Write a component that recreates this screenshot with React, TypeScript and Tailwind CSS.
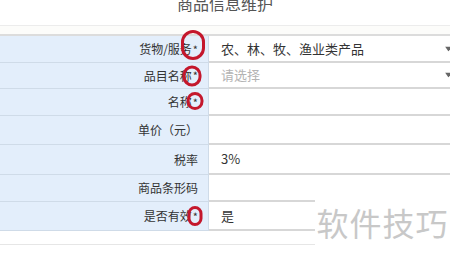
import type { ReactNode } from 'react';

const FONT = { fontFamily: '"Noto Sans CJK SC", "Liberation Sans", sans-serif' };

type Row = { label: string; value?: ReactNode; h: string; arrow?: boolean; ring?: string };

const ROWS: Row[] = [
  { label: '货物/服务', value: '农、林、牧、渔业类产品', h: 'h-[27px]', arrow: true, ring: 'h-[30px] w-[24px] -translate-x-[2px] -translate-y-[4px]' },
  { label: '品目名称', value: <span className="text-[#b3b3b3]">请选择</span>, h: 'h-[26px]', arrow: true, ring: 'h-[21px] w-[19px] -translate-x-[3px]' },
  { label: '名称', h: 'h-[27px]', ring: 'h-[18px] w-[17px] -translate-y-[1px]' },
  { label: '单价（元）', h: 'h-[29px]' },
  { label: '税率', value: '3%', h: 'h-[30px]' },
  { label: '商品条形码', h: 'h-[27px]' },
  { label: '是否有效', value: '是', h: 'h-[29px]', ring: 'h-[20px] w-[15px]' },
];

export default function App() {
  return (
    <div className="relative h-[270px] w-[450px] overflow-hidden bg-white" style={FONT}>
      <div className="h-[26px] overflow-hidden border-b border-[#ececec] text-center">
        <div className="-mt-[7px] text-[16px] leading-[20px] text-[#555]">商品信息维护</div>
      </div>
      <div className="h-[10px] border-b-2 border-[#dcdcdc] bg-[#fcfcfa]" />
      <div>
        {ROWS.map((r) => (
          <div key={r.label} className={`flex ${r.h}`}>
            <div className="flex w-[209px] shrink-0 items-center justify-end border-b border-r border-[#cfdbe8] bg-[#e3eefb] pr-[10px] text-[12px] text-[#333]">
              {r.label}
              {r.ring && (
                <span className="relative ml-[1px] text-[11px]">
                  *
                  <span className="absolute left-1/2 top-1/2 -translate-1/2">
                    <span className={`block rounded-full border-[3px] border-[#c4172c] ${r.ring}`} />
                  </span>
                </span>
              )}
            </div>
            <div className="relative flex flex-1 items-center border-b-2 border-[#d7d7d7] pl-[12px] text-[13px] text-[#333]">
              {r.value}
              {r.arrow && (
                <svg className="absolute right-[-2px] top-1/2 -translate-y-1/2" width="7" height="5" viewBox="0 0 7 5">
                  <path d="M0 0h7L3.5 5z" fill="#666" />
                </svg>
              )}
            </div>
          </div>
        ))}
      </div>
      <div className="h-[14px] border-b border-[#e6e6e6]" />

      <div className="absolute bottom-0 right-0 flex h-[76px] w-[135px] items-start justify-center bg-white pt-[8px]">
        <span className="text-[32px] leading-[40px] tracking-[1px] text-[#c8c8c8]">软件技巧</span>
      </div>
    </div>
  );
}
